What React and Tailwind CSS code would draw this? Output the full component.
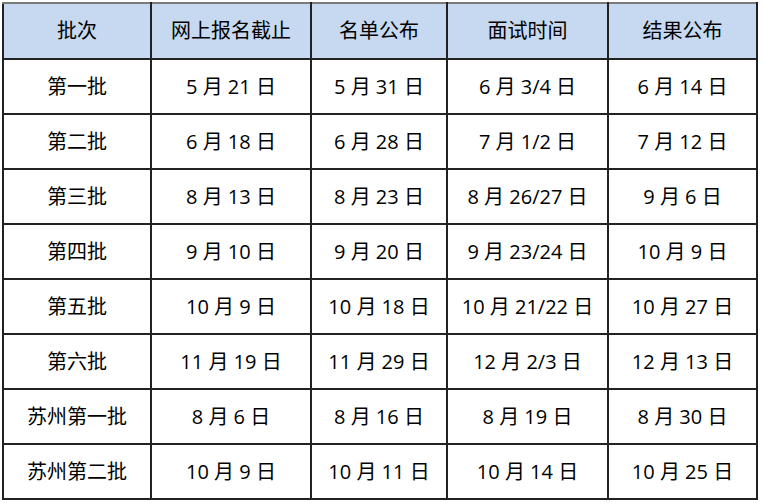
import React from "react";

const headers = ["批次", "网上报名截止", "名单公布", "面试时间", "结果公布"];

const rows = [
  ["第一批", "5 月 21 日", "5 月 31 日", "6 月 3/4 日", "6 月 14 日"],
  ["第二批", "6 月 18 日", "6 月 28 日", "7 月 1/2 日", "7 月 12 日"],
  ["第三批", "8 月 13 日", "8 月 23 日", "8 月 26/27 日", "9 月 6 日"],
  ["第四批", "9 月 10 日", "9 月 20 日", "9 月 23/24 日", "10 月 9 日"],
  ["第五批", "10 月 9 日", "10 月 18 日", "10 月 21/22 日", "10 月 27 日"],
  ["第六批", "11 月 19 日", "11 月 29 日", "12 月 2/3 日", "12 月 13 日"],
  ["苏州第一批", "8 月 6 日", "8 月 16 日", "8 月 19 日", "8 月 30 日"],
  ["苏州第二批", "10 月 9 日", "10 月 11 日", "10 月 14 日", "10 月 25 日"],
];

const widths = ["w-[148px]", "w-[160px]", "w-[136px]", "w-[161px]", "w-[149px]"];

const App = () => {
  return (
    <div
      className="w-[765px] h-[504px] bg-white pl-[2px] pt-[2px]"
      style={{ fontFamily: '"Open Sans", "Noto Sans CJK SC", sans-serif' }}
    >
      <table className="table-fixed border-collapse border-2 border-[#7a7a7a] text-[20px] text-black">
        <thead>
          <tr className="h-[56px] bg-[#c6d9f0]">
            {headers.map((h, i) => (
              <th
                key={h}
                className={`${widths[i]} border-2 border-[#222] border-t-[#7a7a7a] font-normal text-center align-middle`}
              >
                {h}
              </th>
            ))}
          </tr>
        </thead>
        <tbody>
          {rows.map((r) => (
            <tr key={r[0]} className="h-[55px]">
              {r.map((c, i) => (
                <td key={i} className="border-2 border-[#222] text-center align-middle">
                  {c}
                </td>
              ))}
            </tr>
          ))}
        </tbody>
      </table>
    </div>
  );
};

export default App;
